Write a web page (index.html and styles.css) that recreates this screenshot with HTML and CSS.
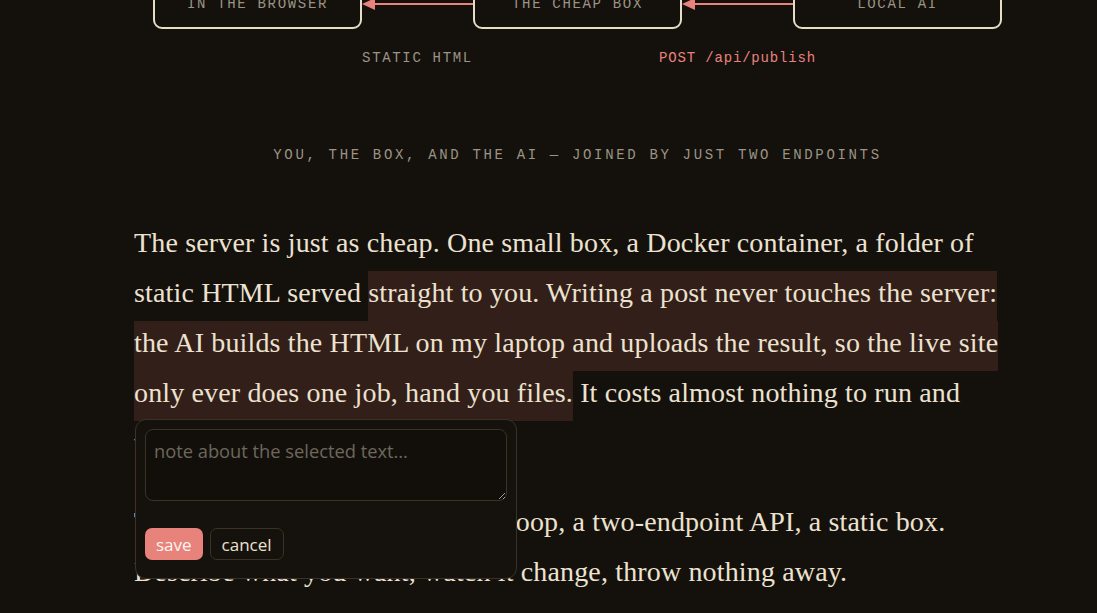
FILE: index.html
```html
<!DOCTYPE html>
<html lang="en">
<head>
  <meta charset="UTF-8" />
  <meta name="viewport" content="width=device-width, initial-scale=1.0" />
  <title>The cheap box</title>
  <link rel="stylesheet" href="styles.css">
</head>
<body>
<main class="post">

  <!-- Diagram: browser <- box <- local AI -->
  <figure class="diagram">
    <div class="flow">
      <div class="node">IN THE BROWSER</div>
      <div class="arrow"><span class="head"></span><span class="shaft"></span></div>
      <div class="node">THE CHEAP BOX</div>
      <div class="arrow"><span class="head"></span><span class="shaft"></span></div>
      <div class="node">LOCAL AI</div>
    </div>
    <div class="flow labels">
      <span class="label">STATIC HTML</span>
      <span class="label label-hot">POST /api/publish</span>
    </div>
    <figcaption class="caption">YOU, THE BOX, AND THE AI — JOINED BY JUST TWO ENDPOINTS</figcaption>
  </figure>

  <div class="body">
    <p>The server is just as cheap. One small box, a Docker container, a folder of static HTML served <span class="mark">straight to you. Writing a post never touches the server: the AI builds the HTML on my laptop and uploads the result, so the live site only ever does one job, hand you files.</span> It costs almost nothing to run and there is nothing to break.</p>
    <p>That is the whole of it: a writing loop, a two-endpoint API, a static box. Describe what you want, watch it change, throw nothing away.</p>

    <!-- Note popup over the selection -->
    <div class="note">
      <textarea class="note-text" placeholder="note about the selected text..."></textarea>
      <div class="note-actions">
        <button class="btn btn-save">save</button>
        <button class="btn btn-cancel">cancel</button>
      </div>
    </div>
  </div>

</main>
</body>
</html>
```

FILE: styles.css
```css
body {
  margin: 0;
  background: #14110c;
  color: #ece2cf;
  overflow: hidden;
}

.post {
  width: 887px;
  margin: 0 0 0 134px;
}

/* diagram */
.diagram {
  margin: -21px 0 0;
  font-family: "Liberation Mono", "DejaVu Sans Mono", monospace;
  font-size: 14px;
}

.flow {
  display: grid;
  grid-template-columns: 209px 111px 209px 111px 209px;
  justify-content: center;
  align-items: center;
}

.node {
  height: 46px;
  border: 2px solid #e6dcc7;
  border-radius: 9px;
  display: flex;
  align-items: center;
  justify-content: center;
  color: #9c9484;
  letter-spacing: 0.12em;
}

.arrow {
  display: flex;
  align-items: center;
  height: 12px;
}
.arrow .head {
  width: 0;
  height: 0;
  border-top: 6px solid transparent;
  border-bottom: 6px solid transparent;
  border-right: 13px solid #e8837c;
}
.arrow .shaft {
  flex: 1;
  height: 2px;
  background: #e8837c;
}

.labels {
  margin-top: 21px;
  height: 16px;
}
.label {
  color: #9c9484;
  letter-spacing: 0.12em;
  text-align: center;
  white-space: nowrap;
  justify-self: center;
}
.label:nth-child(1) { grid-column: 2; }
.label:nth-child(2) { grid-column: 4; }
.label-hot {
  color: #e8837c;
  letter-spacing: 0.06em;
}

.caption {
  margin-top: 81px;
  text-align: center;
  color: #9c9484;
  letter-spacing: 0.19em;
}

/* article text */
.body {
  position: relative;
  margin-top: 55px;
  font-family: "Liberation Serif", "DejaVu Serif", serif;
  font-size: 28px;
  letter-spacing: 0.15px;
  line-height: 50px;
}

.body p {
  margin: 0 0 29px;
}

.mark {
  background: rgba(70, 40, 34, 0.62);
  padding: 6px 0 13px;
}

/* note popup */
.note {
  position: absolute;
  top: 201px;
  left: 1px;
  width: 362px;
  padding: 9px 9px 18px;
  background: #15120d;
  border: 1px solid #3a3228;
  border-radius: 11px;
  font-family: "Open Sans", "Noto Sans", sans-serif;
  letter-spacing: 0;
}

.note-text {
  display: block;
  box-sizing: border-box;
  width: 100%;
  height: 72px;
  padding: 9px 8px;
  background: #120f0b;
  border: 1px solid #3a3228;
  border-radius: 8px;
  color: #ece2cf;
  font-family: inherit;
  font-size: 18.3px;
  line-height: 1.3;
  resize: vertical;
}
.note-text::placeholder {
  color: #6e675c;
}

.note-actions {
  display: flex;
  gap: 7px;
  margin-top: 27px;
}

.btn {
  height: 32px;
  padding: 0 11px;
  border-radius: 7px;
  font-family: inherit;
  font-size: 17px;
  cursor: pointer;
}
.btn-save {
  background: #e8837c;
  border: none;
  color: #fff6f0;
}
.btn-cancel {
  background: #15120d;
  border: 1px solid #3a3228;
  color: #ece2cf;
}
```
